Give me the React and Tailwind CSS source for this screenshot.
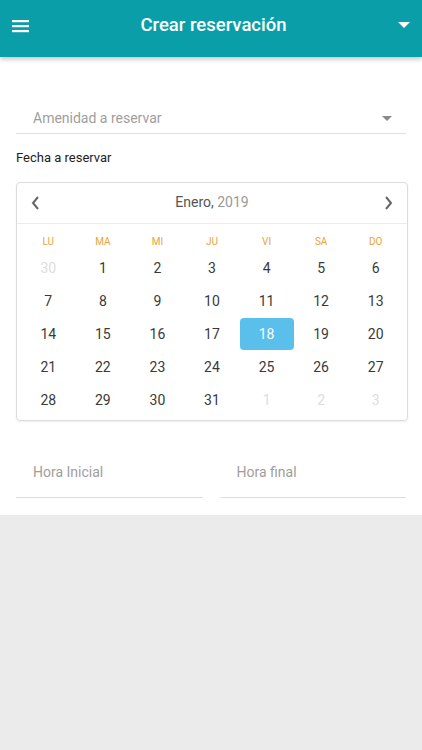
const weekdays = ['LU', 'MA', 'MI', 'JU', 'VI', 'SA', 'DO']

const days = [
  { d: 30, muted: true },
  ...Array.from({ length: 31 }, (_, i) => ({ d: i + 1 })),
  { d: 1, muted: true },
  { d: 2, muted: true },
  { d: 3, muted: true },
]

export default function App() {
  return (
    <div className="min-h-[750px] bg-[#ebebeb] font-['Roboto',sans-serif]">
      <header className="relative z-10 flex h-[57px] items-center justify-between bg-[#0a9fa8] px-3 pb-[6px] shadow-[0_2px_5px_rgba(0,0,0,0.25)]">
        <svg width="17" height="14" viewBox="0 0 17 14" fill="white">
          <rect x="0" y="1" width="17" height="2.2" />
          <rect x="0" y="6" width="17" height="2.2" />
          <rect x="0" y="11" width="17" height="2.2" />
        </svg>
        <h1 className="text-[18.5px] font-medium text-white">Crear reservación</h1>
        <svg width="12" height="7" viewBox="0 0 12 7" fill="white">
          <path d="M0 0h12L6 6z" />
        </svg>
      </header>

      <main className="bg-white px-4 pb-[17px] pt-[51px]">
        <div className="flex items-center justify-between border-b border-[#e0e0e0] pb-[4px] pl-[17px] pr-[14px]">
          <span className="text-[14px] text-[#9e9e9e]">Amenidad a reservar</span>
          <svg width="10" height="6" viewBox="0 0 10 6" fill="#8a8a8a">
            <path d="M0 0h10L5 5z" />
          </svg>
        </div>

        <p className="mt-[14px] text-[13px] text-[#222]">Fecha a reservar</p>

        <div className="mt-[14px] mr-[-2px] rounded-[4px] border border-[#dcdcdc] shadow-[0_1px_2px_rgba(0,0,0,0.08)]">
          <div className="flex h-[41px] items-center justify-between border-b border-[#ececec] px-[14px]">
            <svg width="9" height="14" viewBox="0 0 9 14" fill="none" stroke="#666" strokeWidth="2">
              <path d="M7 1L2 7l5 6" />
            </svg>
            <span className="text-[14px] text-[#555]">
              Enero, <span className="text-[#999]">2019</span>
            </span>
            <svg width="9" height="14" viewBox="0 0 9 14" fill="none" stroke="#666" strokeWidth="2">
              <path d="M2 1l5 6-5 6" />
            </svg>
          </div>

          <div className="grid grid-cols-7 px-1 pt-[8px]">
            {weekdays.map((w) => (
              <div key={w} className="flex h-[20px] items-center justify-center text-[10px] text-[#e8a33a]">
                {w}
              </div>
            ))}
          </div>

          <div className="grid grid-cols-7 px-1 pb-[3px]">
            {days.map((day, i) =>
              day.d === 18 && !day.muted ? (
                <div key={i} className="flex h-[33px] items-center justify-center">
                  <div className="flex h-[32px] w-[54px] items-center justify-center rounded-[4px] bg-[#5bbfec] text-[14px] text-white">
                    18
                  </div>
                </div>
              ) : (
                <div
                  key={i}
                  className={`flex h-[33px] items-center justify-center text-[14px] ${day.muted ? 'text-[#dddddd]' : 'text-[#3a3a3a]'}`}
                >
                  {day.d}
                </div>
              )
            )}
          </div>
        </div>

        <div className="mt-[39px] grid grid-cols-2 gap-[17px]">
          <div className="border-b border-[#dcdcdc] pb-[13px] pl-[17px]">
            <span className="text-[14px] text-[#9e9e9e]">Hora Inicial</span>
          </div>
          <div className="border-b border-[#dcdcdc] pb-[13px] pl-[17px]">
            <span className="text-[14px] text-[#9e9e9e]">Hora final</span>
          </div>
        </div>
      </main>
    </div>
  )
}
